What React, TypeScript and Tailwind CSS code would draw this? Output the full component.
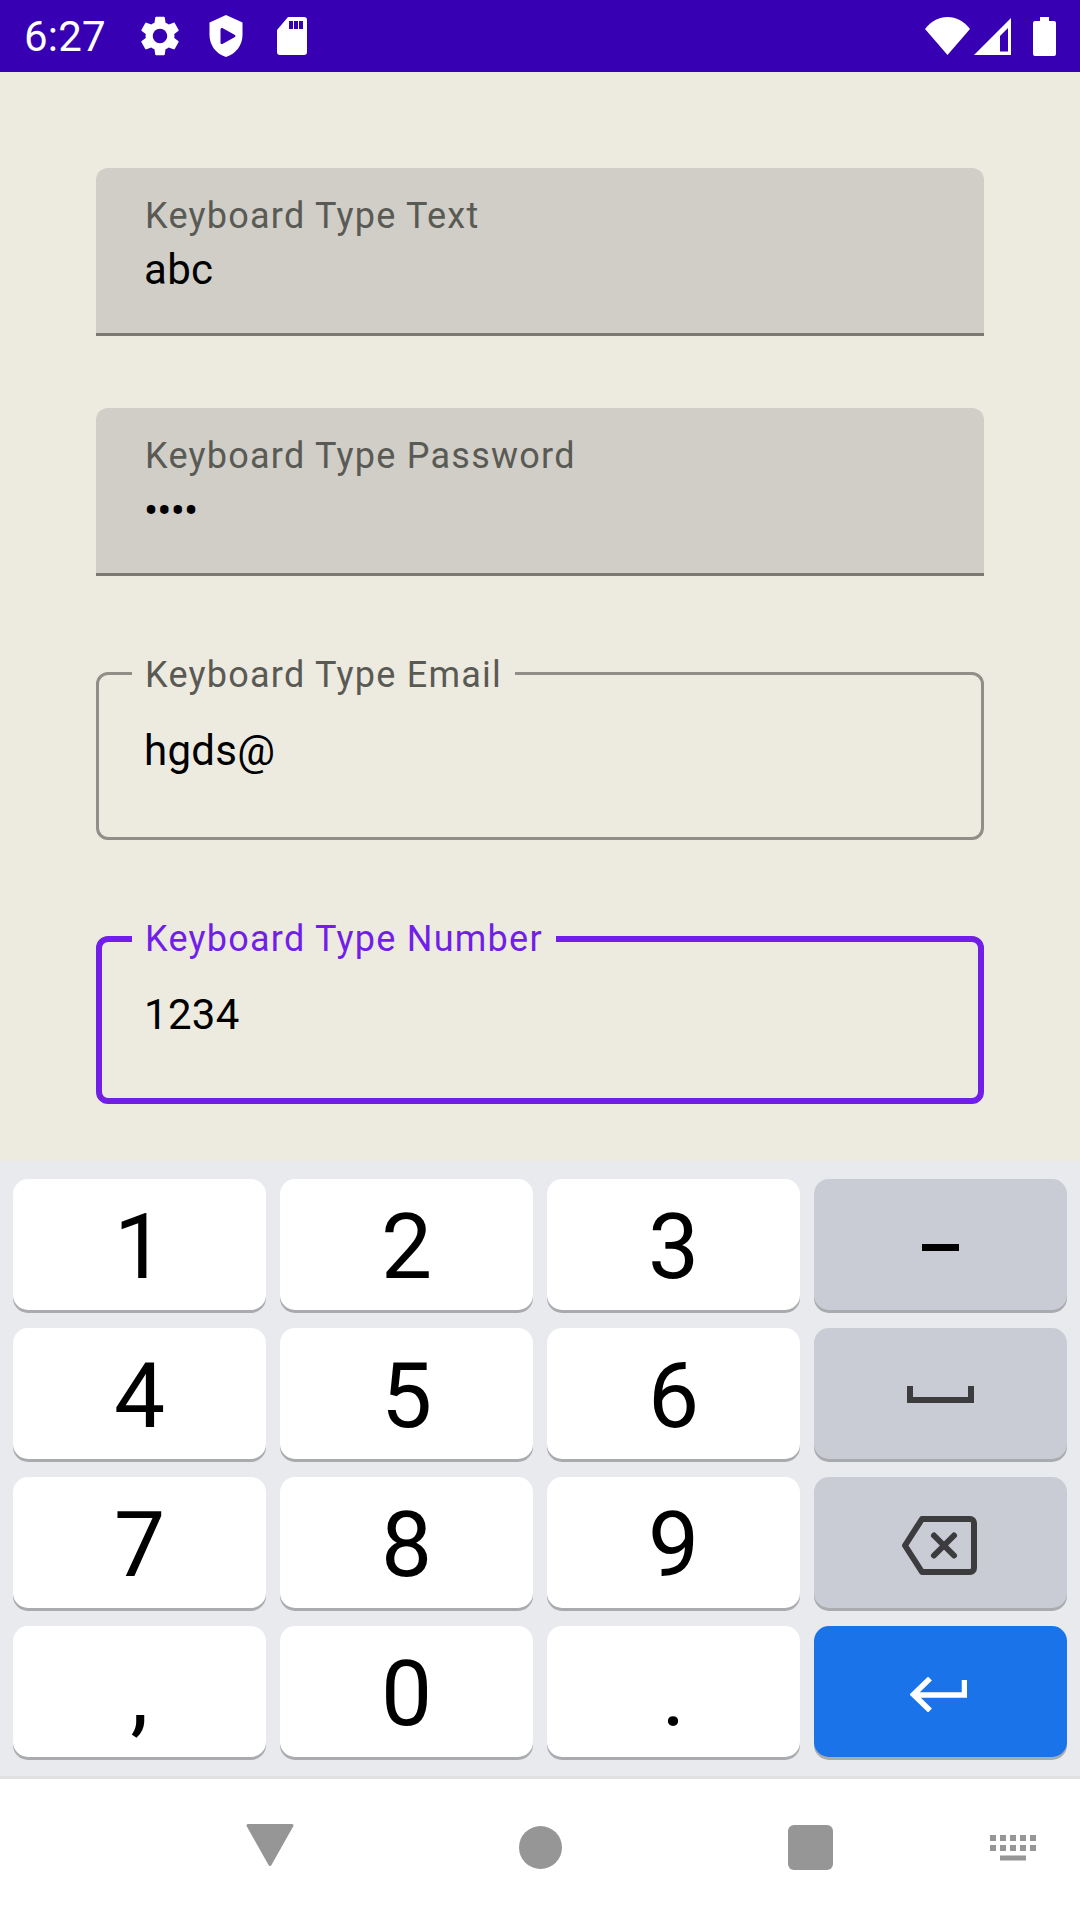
import type { ReactNode } from "react";

function StatusBar() {
  return (
    <div className="flex h-[72px] items-center bg-[#3700b3] px-[24px] text-white">
      <span className="w-[112px] pt-[2px] text-[42px] leading-none tracking-[0.2px]">6:27</span>
      <svg viewBox="0 0 24 24" className="h-[48px] w-[48px]" fill="currentColor">
        <path d="M19.14 12.94c.04-.3.06-.61.06-.94 0-.32-.02-.64-.07-.94l2.03-1.58c.18-.14.23-.41.12-.61l-1.92-3.32c-.12-.22-.37-.29-.59-.22l-2.39.96c-.5-.38-1.03-.7-1.62-.94l-.36-2.54c-.04-.24-.24-.41-.48-.41h-3.84c-.24 0-.43.17-.47.41l-.36 2.54c-.59.24-1.13.57-1.62.94l-2.39-.96c-.22-.08-.47 0-.59.22L2.74 8.87c-.12.21-.08.47.12.61l2.03 1.58c-.05.3-.09.63-.09.94s.02.64.07.94l-2.03 1.58c-.18.14-.23.41-.12.61l1.92 3.32c.12.22.37.29.59.22l2.39-.96c.5.38 1.03.7 1.62.94l.36 2.54c.05.24.24.41.48.41h3.84c.24 0 .44-.17.47-.41l.36-2.54c.59-.24 1.13-.56 1.62-.94l2.39.96c.22.08.47 0 .59-.22l1.92-3.32c.12-.22.07-.47-.12-.61l-2.01-1.58zM12 15.6c-1.98 0-3.6-1.62-3.6-3.6s1.62-3.6 3.6-3.6 3.6 1.62 3.6 3.6-1.62 3.6-3.6 3.6z" />
      </svg>
      <svg viewBox="0 0 33 42" className="ml-[25px] h-[42px] w-[34px]">
        <path
          fill="currentColor"
          fillRule="evenodd"
          d="M16.500 0 33 7.500V20c0 10-6.500 19-16.500 22C6.500 39 0 30 0 20V7.500zM11 14.500v13c0 1.500 1 2 2.300 1.300L25 22.300c1.300-.7 1.300-1.900 0-2.600l-11.700-6.500c-1.300-.7-2.300-.2-2.300 1.300z"
        />
      </svg>
      <svg viewBox="0 0 30 38" className="ml-[34px] h-[38px] w-[30px]">
        <path
          fill="currentColor"
          fillRule="evenodd"
          d="M11 0h16a3 3 0 0 1 3 3v32a3 3 0 0 1-3 3H3a3 3 0 0 1-3-3V13zM12 4v8h4V4zM17 4v8h4V4zM22 4v8h4V4z"
        />
      </svg>
      <div className="ml-auto flex items-center">
        <svg viewBox="0 0 45 38" className="h-[38px] w-[45px]">
          <path fill="currentColor" d="M0 12C6 4 14 0 22.500 0S39 4 45 12L22.500 38z" />
        </svg>
        <svg viewBox="0 0 37 37" className="ml-[4px] h-[37px] w-[37px]">
          <path fill="currentColor" fillRule="evenodd" d="M37 0v37H0zM34 10l-8 8v15.500h8z" />
        </svg>
        <svg viewBox="0 0 23 39" className="ml-[22px] h-[39px] w-[23px]">
          <path
            fill="currentColor"
            d="M7 0h9v4h5a2 2 0 0 1 2 2v31a2 2 0 0 1-2 2H2a2 2 0 0 1-2-2V6a2 2 0 0 1 2-2h5z"
          />
        </svg>
      </div>
    </div>
  );
}

function FilledField({ label, value }: { label: string; value: ReactNode }) {
  return (
    <div className="h-[168px] rounded-t-[12px] border-b-[3px] border-[#7a7a70] bg-[#d0cec6] pl-[48px] pt-[24px]">
      <div className="pl-[1px] text-[36px] leading-[48px] tracking-[1.25px] text-[#5a5a55]">{label}</div>
      <div className="mt-[2px] text-[42px] leading-[56px] tracking-[0.3px] text-black">{value}</div>
    </div>
  );
}

function OutlinedField({
  label,
  value,
  focused,
}: {
  label: string;
  value: string;
  focused?: boolean;
}) {
  return (
    <div
      className={
        focused
          ? "relative h-[168px] rounded-[12px] border-[6px] border-[#711fe8] pl-[42px] pt-[45px]"
          : "relative h-[168px] rounded-[12px] border-[3px] border-[#8f8e87] pl-[45px] pt-[48px]"
      }
    >
      <div
        className={
          focused
            ? "absolute left-[30px] top-[-27px] bg-[#edebe0] px-[13px] text-[36px] leading-[48px] tracking-[1.25px] text-[#711fe8]"
            : "absolute left-[33px] top-[-24px] bg-[#edebe0] px-[13px] text-[36px] leading-[48px] tracking-[1.25px] text-[#5a5a55]"
        }
      >
        {label}
      </div>
      <div className="text-[42px] leading-[56px] tracking-[0.3px] text-black">{value}</div>
    </div>
  );
}

function Key({ children, kind = "light" }: { children: ReactNode; kind?: "light" | "dark" | "blue" }) {
  const bg =
    kind === "light" ? "bg-white" : kind === "dark" ? "bg-[#c9ccd4]" : "bg-[#1a73e8]";
  return (
    <div
      className={`flex h-[131px] items-center justify-center rounded-[15px] pt-[6px] text-[91px] leading-none text-black shadow-[0_3px_0_#aaabae] ${bg}`}
    >
      {children}
    </div>
  );
}

function Keyboard() {
  return (
    <div className="grid grid-cols-4 gap-x-[14px] gap-y-[18px] border-b-[3px] border-[#e0e1e3] bg-[#e8eaed] px-[13px] pb-[19px] pt-[18px]">
      <Key>1</Key>
      <Key>2</Key>
      <Key>3</Key>
      <Key kind="dark">
        <div className="h-[7px] w-[37px] bg-black" />
      </Key>
      <Key>4</Key>
      <Key>5</Key>
      <Key>6</Key>
      <Key kind="dark">
        <svg viewBox="0 0 67 17" className="mb-[4px] h-[17px] w-[67px]">
          <path fill="none" stroke="#3c3c3f" strokeWidth="6" d="M3 0v14h61V0" />
        </svg>
      </Key>
      <Key>7</Key>
      <Key>8</Key>
      <Key>9</Key>
      <Key kind="dark">
        <svg viewBox="0 0 75 59" className="mr-[3px] h-[59px] w-[75px]">
          <path
            fill="none"
            stroke="#3c3c3f"
            strokeWidth="6"
            strokeLinejoin="round"
            d="M20 3H68a4 4 0 0 1 4 4V52a4 4 0 0 1-4 4H20L3 29.500z"
          />
          <path
            fill="none"
            stroke="#3c3c3f"
            strokeWidth="6"
            strokeLinecap="round"
            d="M32 19.500l20 20M52 19.500l-20 20"
          />
        </svg>
      </Key>
      <Key>,</Key>
      <Key>0</Key>
      <Key>.</Key>
      <Key kind="blue">
        <svg viewBox="0 0 57 35" className="mr-[5px] h-[35px] w-[57px]">
          <path fill="none" stroke="#fff" strokeWidth="5.500" d="M54.500 3v15H5M20 1.500 3.500 17.500 20 33.500" />
        </svg>
      </Key>
    </div>
  );
}

function NavBar() {
  return (
    <div className="relative grid h-[141px] grid-cols-3 justify-items-center bg-white px-[135px]">
      <svg viewBox="0 0 48 42" className="mt-[45px] h-[42px] w-[48px]">
        <path
          fill="#969696"
          stroke="#969696"
          strokeWidth="3"
          strokeLinejoin="round"
          d="M2 1.500h44L24 40.500z"
        />
      </svg>
      <div className="mt-[47px] h-[43px] w-[43px] rounded-full bg-[#969696]" />
      <div className="mt-[46px] h-[45px] w-[45px] rounded-[6px] bg-[#969696]" />
      <svg viewBox="0 0 46 26" className="absolute left-[990px] top-[56px] h-[26px] w-[46px]">
        <path
          fill="#969696"
          d="M0 0h6v6H0zM10 0h6v6h-6zM20 0h6v6h-6zM30 0h6v6h-6zM40 0h6v6h-6zM0 10h6v6H0zM10 10h6v6h-6zM20 10h6v6h-6zM30 10h6v6h-6zM40 10h6v6h-6zM10 20.500h26v5H10z"
        />
      </svg>
    </div>
  );
}

export default function App() {
  return (
    <div className="flex h-[1920px] w-[1080px] flex-col bg-[#edebe0] font-['Roboto',sans-serif]">
      <StatusBar />
      <main className="flex flex-1 flex-col gap-[96px] px-[96px] pt-[96px]">
        <div className="flex flex-col gap-[72px]">
          <FilledField label="Keyboard Type Text" value="abc" />
          <FilledField
            label="Keyboard Type Password"
            value={<span className="inline-block translate-y-[1px] tracking-[-0.8px]">••••</span>}
          />
        </div>
        <OutlinedField label="Keyboard Type Email" value="hgds@" />
        <OutlinedField label="Keyboard Type Number" value="1234" focused />
      </main>
      <Keyboard />
      <NavBar />
    </div>
  );
}
